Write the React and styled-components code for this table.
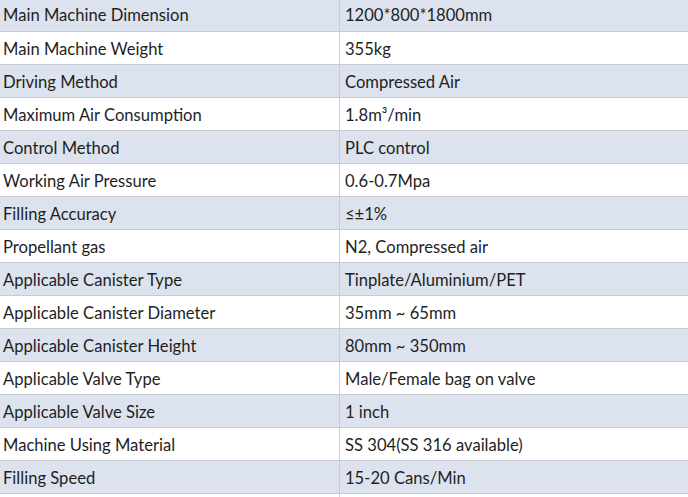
import React from "react";
import styled, { createGlobalStyle } from "styled-components";

const Global = createGlobalStyle`
  html, body { margin: 0; padding: 0; background: #fff; }
  body { font-family: Lato, "Open Sans", sans-serif; overflow: hidden; }
`;

const Frame = styled.div`
  width: 688px;
  height: 497px;
  overflow: hidden;
`;

const Table = styled.table`
  width: 688px;
  border-collapse: collapse;
  margin-top: -2px;
  font-size: 16.6px;
  color: #1f1f1f;
`;

const Row = styled.tr`
  height: 33px;
  background: ${(p) => (p.$shade ? "#dce3ee" : "#ffffff")};
  border-bottom: 1px solid #c9ccd2;
`;

const Cell = styled.td`
  padding: 2px 0 0 ${(p) => (p.$right ? "5px" : "3px")};
  width: ${(p) => (p.$right ? "auto" : "336px")};
  border-left: ${(p) => (p.$right ? "1px solid #c9ccd2" : "none")};
  vertical-align: middle;
  white-space: nowrap;
`;

const rows = [
  ["Main Machine Dimension", "1200*800*1800mm"],
  ["Main Machine Weight", "355kg"],
  ["Driving Method", "Compressed Air"],
  ["Maximum Air Consumption", "1.8m³/min"],
  ["Control Method", "PLC control"],
  ["Working Air Pressure", "0.6-0.7Mpa"],
  ["Filling Accuracy", "≤±1%"],
  ["Propellant gas", "N2, Compressed air"],
  ["Applicable Canister Type", "Tinplate/Aluminium/PET"],
  ["Applicable Canister Diameter", "35mm ~ 65mm"],
  ["Applicable Canister Height", "80mm ~ 350mm"],
  ["Applicable Valve Type", "Male/Female bag on valve"],
  ["Applicable Valve Size", "1 inch"],
  ["Machine Using Material", "SS 304(SS 316 available)"],
  ["Filling Speed", "15-20 Cans/Min"],
  ["", ""],
];

export default function App() {
  return (
    <Frame>
      <Global />
      <Table>
        <tbody>
          {rows.map(([k, v], i) => (
            <Row key={i} $shade={i % 2 === 0}>
              <Cell>{k}</Cell>
              <Cell $right>{v}</Cell>
            </Row>
          ))}
        </tbody>
      </Table>
    </Frame>
  );
}
